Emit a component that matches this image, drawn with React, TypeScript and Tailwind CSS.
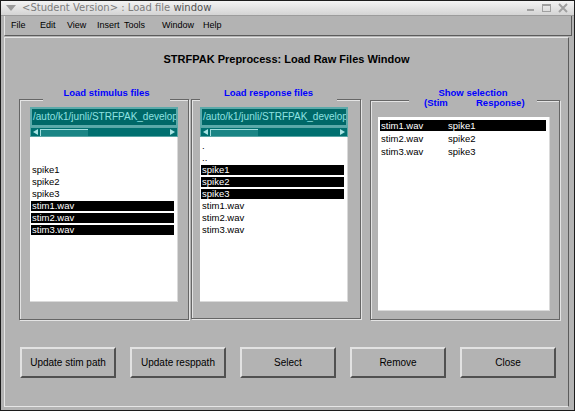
import React from 'react';

type Row = { text: string; selected?: boolean };

const stimRows: Row[] = [
  { text: '' },
  { text: '' },
  { text: 'spike1' },
  { text: 'spike2' },
  { text: 'spike3' },
  { text: 'stim1.wav', selected: true },
  { text: 'stim2.wav', selected: true },
  { text: 'stim3.wav', selected: true },
];

const respRows: Row[] = [
  { text: '.' },
  { text: '..' },
  { text: 'spike1', selected: true },
  { text: 'spike2', selected: true },
  { text: 'spike3', selected: true },
  { text: 'stim1.wav' },
  { text: 'stim2.wav' },
  { text: 'stim3.wav' },
];

const pairs = [
  { stim: 'stim1.wav', resp: 'spike1', selected: true },
  { stim: 'stim2.wav', resp: 'spike2' },
  { stim: 'stim3.wav', resp: 'spike3' },
];

// each menu title sits in a slot of its own width, like the Motif menubar
const menus = [
  { label: 'File', w: 'w-[29px]' },
  { label: 'Edit', w: 'w-[27px]' },
  { label: 'View', w: 'w-[30px]' },
  { label: 'Insert', w: 'w-[27px]' },
  { label: 'Tools', w: 'w-[38px]' },
  { label: 'Window', w: 'w-[41px]' },
  { label: 'Help', w: 'w-[30px]' },
];
const buttons = ['Update stim path', 'Update resppath', 'Select', 'Remove', 'Close'];

// teal path field + horizontal scrollbar, as drawn by the old Motif toolkit
function PathField({ text }: { text: string }) {
  return (
    <div className="w-[148px]">
      <div className="h-[20px] bg-[#006868] border-2 border-[#5caaaa] overflow-hidden whitespace-nowrap text-[10px] leading-[16px] text-[#8fe2e2] pl-[1px]">
        {text}
      </div>
      <div className="h-[10px] bg-[#007070] border border-[#58a6a6] flex items-center">
        <svg width="9" height="8" viewBox="0 0 9 8" className="shrink-0">
          <polygon points="7,1 7,7 2,4" fill="#a8e4e4" />
        </svg>
        <div className="w-[48px] h-[7px] bg-[#1a8585] border-t border-l border-[#a0dede] border-b-[#004848] border-r-[#004848]" />
        <div className="flex-1" />
        <svg width="9" height="8" viewBox="0 0 9 8" className="shrink-0">
          <polygon points="2,1 2,7 7,4" fill="#a8e4e4" />
        </svg>
      </div>
    </div>
  );
}

function FileList({ rows }: { rows: Row[] }) {
  return (
    <div className="w-[148px] h-[165px] bg-white border-b border-r border-[#dadada] pt-[4px] text-[9.5px]">
      {rows.map((r, i) => (
        <div
          key={i}
          className={`h-[10px] leading-[10px] mb-[2px] ml-[1px] mr-[3px] pl-[1px] whitespace-nowrap ${
            r.selected ? 'bg-black text-white' : 'text-black'
          }`}
        >
          {r.text || '\u00a0'}
        </div>
      ))}
    </div>
  );
}

const frame =
  'relative border border-[#666666] shadow-[inset_1px_1px_0_#e4e4e4,1px_1px_0_#e4e4e4]';

export default function App() {
  return (
    <div
      className="w-[575px] h-[411px] bg-[#b3b3b3] border border-[#1c1c1c] flex flex-col overflow-hidden"
      style={{ fontFamily: '"Liberation Sans", Arial, sans-serif' }}
    >
      {/* Title bar */}
      <div className="h-[15px] shrink-0 bg-gradient-to-b from-[#f4f4f4] to-[#d4d4d4] border-b border-[#9c9c9c] flex items-center">
        <svg width="12" height="8" viewBox="0 0 12 8" className="ml-[4px]">
          <polygon points="1,1 11,1 6,7" fill="#9a9a9a" />
        </svg>
        <span
          className="ml-[5px] text-[10px] leading-[14px] text-[#7c7c7c] whitespace-nowrap"
          style={{ fontFamily: '"DejaVu Sans", sans-serif' }}
        >
          &lt;Student Version&gt; : Load file <span className="text-[#505050]">window</span>
        </span>
        <div className="flex-1" />
        <svg width="44" height="10" viewBox="0 0 44 10" className="mr-[4px]">
          <rect x="1" y="6" width="7" height="2" fill="#a0a0a0" />
          <rect x="16.5" y="1.5" width="8" height="7" fill="none" stroke="#a0a0a0" />
          <rect x="16" y="1" width="9" height="2" fill="#a0a0a0" />
          <path d="M33 1 L41 9 M41 1 L33 9" stroke="#a0a0a0" strokeWidth="2" />
        </svg>
      </div>

      {/* Menu bar */}
      <div className="h-[20px] shrink-0 ml-[3px] mr-[2px] border-l border-[#e6e6e6] border-r border-r-[#5c5c5c] border-b border-b-[#5c5c5c] flex items-center pl-[6px] text-[9px] text-black">
        {menus.map((m) => (
          <span key={m.label} className={`${m.w} whitespace-nowrap`}>
            {m.label}
          </span>
        ))}
      </div>

      {/* Figure area */}
      <div className="flex-1 ml-[3px] mr-[5px] mb-[3px] mt-[1px] border-t border-l border-[#e6e6e6] border-r border-r-[#5c5c5c] border-b border-b-[#e6e6e6] flex flex-col">
        <div className="mt-[14px] h-[14px] leading-[14px] text-center text-[11px] font-bold text-black">
          STRFPAK Preprocess: Load Raw Files Window
        </div>

        <div className="mt-[33px] pl-[14px] flex items-start">
          {/* Stimulus panel */}
          <div className={`${frame} w-[170px] h-[221px] pl-[10px] pt-[7px]`}>
            <div className="absolute left-[23px] top-[-15px] w-[127px] h-[17px] bg-[#b3b3b3] text-center text-[9.5px] font-bold leading-[16px] text-[#0000ff]">
              Load stimulus files
            </div>
            <PathField text="/auto/k1/junli/STRFPAK_develop" />
            <FileList rows={stimRows} />
          </div>

          {/* Response panel */}
          <div className={`${frame} ml-[2px] w-[170px] h-[220px] pl-[8px] pt-[7px]`}>
            <div className="absolute left-[8px] top-[-15px] w-[137px] h-[17px] bg-[#b3b3b3] text-center text-[9.5px] font-bold leading-[16px] text-[#0000ff]">
              Load response files
            </div>
            <PathField text="/auto/k1/junli/STRFPAK_develop" />
            <FileList rows={respRows} />
          </div>

          {/* Selection panel */}
          <div className={`${frame} ml-[9px] mt-[1px] w-[190px] h-[220px] pl-[7px] pt-[16px]`}>
            <div className="absolute left-[38px] top-[-15px] w-[128px] h-[23px] bg-[#b3b3b3] pt-[2px] text-[9.5px] font-bold leading-[10px] text-[#0000ff]">
              <div className="text-center">Show selection</div>
              <div className="flex pl-[15px]">
                <span className="w-[52px]">(Stim</span>
                <span>Response)</span>
              </div>
            </div>
            <div className="w-[172px] h-[194px] bg-white border-b border-r border-[#dadada] pt-[3px] text-[9.5px]">
              {pairs.map((p) => (
                <div
                  key={p.stim}
                  className={`h-[11px] leading-[11px] mb-[2px] ml-[2px] mr-[3px] pl-[1px] flex whitespace-nowrap ${
                    p.selected ? 'bg-black text-white' : 'text-black'
                  }`}
                >
                  <span className="w-[67px]">{p.stim}</span>
                  <span>{p.resp}</span>
                </div>
              ))}
            </div>
          </div>
        </div>

        {/* Buttons */}
        <div className="mt-[27px] pl-[15px] flex gap-[14px]">
          {buttons.map((b) => (
            <button
              key={b}
              className="w-[96px] h-[31px] bg-[#b3b3b3] border-2 border-t-[#e2e2e2] border-l-[#e2e2e2] border-r-[#505050] border-b-[#505050] text-[10px] text-black"
            >
              {b}
            </button>
          ))}
        </div>
      </div>
    </div>
  );
}
